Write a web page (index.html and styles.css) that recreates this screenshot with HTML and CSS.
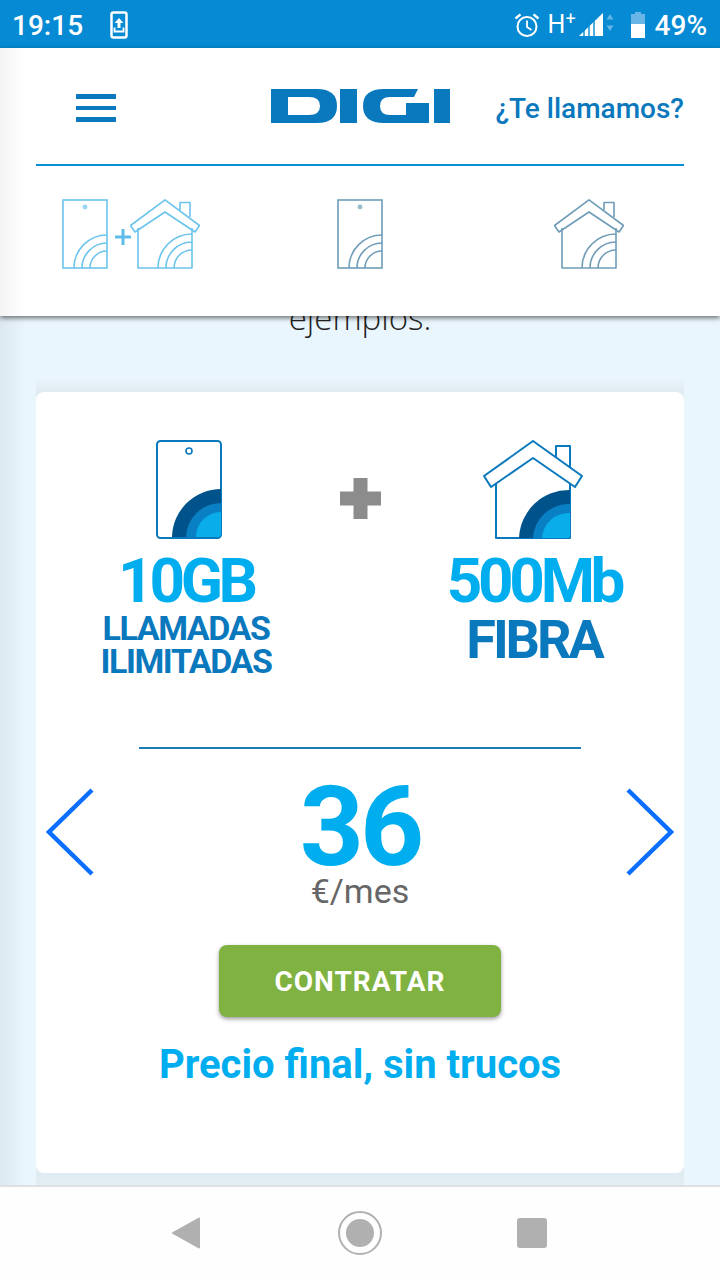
FILE: index.html
```html
<!DOCTYPE html>
<html lang="es">
<head>
  <meta charset="UTF-8" />
  <meta name="viewport" content="width=device-width, initial-scale=1.0" />
  <title>DIGI</title>
  <link rel="stylesheet" href="styles.css">
</head>
<body>
  <svg class="defs" aria-hidden="true">
    <symbol id="phone-line" viewBox="0 0 46 70">
      <rect x="1" y="1" width="44" height="68" fill="none" stroke="currentColor" stroke-width="1.6" />
      <circle cx="23" cy="8" r="2.4" fill="currentColor" opacity="0.7" />
      <g fill="none" stroke="currentColor" stroke-width="1.6">
        <path d="M12 69A33 33 0 0 1 45 36" />
        <path d="M20 69A25 25 0 0 1 45 44" />
        <path d="M28 69A17 17 0 0 1 45 52" />
      </g>
    </symbol>
    <symbol id="house-line" viewBox="0 0 70 70">
      <g fill="none" stroke="currentColor" stroke-width="1.6" stroke-linejoin="round">
        <path d="M50 11V3.500H60V18" />
        <path d="M35 .8L69.500 26.500L65 33L35 13L5 33L.5 26.500Z" />
        <path d="M8 29V69H62V29" />
        <path d="M28 69A34 34 0 0 1 62 35" />
        <path d="M36 69A26 26 0 0 1 62 43" />
        <path d="M44 69A18 18 0 0 1 62 51" />
      </g>
    </symbol>
  </svg>

  <div class="page">
    <div class="statusbar">
      <div class="status-left">
        <span class="status-text">19:15</span>
        <svg class="icon-upload" width="18" height="28" viewBox="0 0 18 28">
          <rect x="1.500" y="1.500" width="15" height="25" rx="2" fill="none" stroke="#fff" stroke-width="2.500" />
          <path d="M9 7L13.500 12H10.500V17H7.500V12H4.500Z" fill="#fff" />
          <path d="M4.500 16.500V20.500H13.500V16.500" fill="none" stroke="#fff" stroke-width="1.800" />
        </svg>
      </div>
      <div class="status-right">
        <svg class="icon-alarm" width="26" height="26" viewBox="0 0 26 26">
          <circle cx="13" cy="14.500" r="9.500" fill="none" stroke="#fff" stroke-width="2" />
          <path d="M13 8.500V15L17.500 18" fill="none" stroke="#fff" stroke-width="1.800" />
          <path d="M1.500 6.500L6.500 2.300M24.500 6.500L19.500 2.300" stroke="#fff" stroke-width="2.400" />
        </svg>
        <span class="status-net">H<sup>+</sup></span>
        <svg class="icon-signal" width="35" height="24" viewBox="0 0 35 24">
          <path d="M0 23L24 0V23Z" fill="#fff" />
          <path d="M5 14V24M10 9V24M15 5V24" stroke="#058ad3" stroke-width="1.400" />
          <path d="M31 1L34.500 6.500H27.500ZM31 18L27.500 12.500H34.500Z" fill="#64b5e6" />
        </svg>
        <svg class="icon-battery" width="14" height="26" viewBox="0 0 14 26">
          <path d="M4 0H10V2H14V26H0V2H4Z" fill="#67b6e6" />
          <rect y="12" width="14" height="14" fill="#fff" />
        </svg>
        <span class="status-text">49%</span>
      </div>
    </div>

    <header class="site-header">
      <div class="header-top">
        <div class="burger"><span></span><span></span><span></span></div>
        <svg class="logo" width="179" height="34" viewBox="0 0 179 34">
          <path fill-rule="evenodd" d="M0 0H46Q66 0 66 17Q66 34 46 34H0ZM17 8V26H38Q49 26 49 17Q49 8 38 8Z" />
          <rect x="69" width="17" height="34" />
          <path d="M147 0H113Q92 0 92 17Q92 34 113 34H158V14H135V26H119Q109 26 109 17Q109 8 119 8H143Z" />
          <rect x="163" width="16" height="34" />
        </svg>
        <a class="call-link">¿Te llamamos?</a>
      </div>
      <div class="tabs">
        <div class="tab tab-light">
          <svg class="tab-phone"><use href="#phone-line" /></svg>
          <svg class="tab-plus" width="16" height="16" viewBox="0 0 16 16"><path d="M8 0V16M0 8H16" stroke="currentColor" stroke-width="3" /></svg>
          <svg class="tab-house"><use href="#house-line" /></svg>
        </div>
        <div class="tab tab-dark">
          <svg class="tab-phone"><use href="#phone-line" /></svg>
        </div>
        <div class="tab tab-dark">
          <svg class="tab-house"><use href="#house-line" /></svg>
        </div>
      </div>
    </header>

    <main class="content">
      <p class="intro">ejemplos.</p>
      <div class="card-wrap">
        <section class="card">
          <div class="features">
            <div class="feature feature-mobile">
              <svg class="feature-icon" width="66" height="100" viewBox="0 0 66 100">
                <rect x="1" y="1" width="64" height="97" rx="3.500" fill="#fff" stroke="#0a78bd" stroke-width="2" />
                <circle cx="33" cy="11" r="3" fill="none" stroke="#0a78bd" stroke-width="1.600" />
                <path d="M16 97A49 49 0 0 1 65 49V94Q65 97 62 97Z" fill="#00528a" />
                <path d="M30 97A35 35 0 0 1 65 63V94Q65 97 62 97Z" fill="#0a80c4" />
                <path d="M40 97A25 25 0 0 1 65 72V94Q65 97 62 97Z" fill="#09ade9" />
              </svg>
              <div class="big-num">10GB</div>
              <div class="sub-small">LLAMADAS<br>ILIMITADAS</div>
            </div>
            <svg class="big-plus" width="41" height="41" viewBox="0 0 41 41"><path d="M20.500 0V41M0 20.500H41" stroke="#8c8c8c" stroke-width="14" /></svg>
            <div class="feature feature-home">
              <svg class="feature-icon" width="100" height="100" viewBox="0 0 100 100">
                <g fill="#fff" stroke="#0a78bd" stroke-width="2" stroke-linejoin="round">
                  <path d="M73 18V6H87V28Z" />
                  <path d="M13 36V98H87V36L50 17Z" />
                </g>
                <path d="M36 98A50 50 0 0 1 87 50V96Q87 98 85 98Z" fill="#00528a" />
                <path d="M50 98A36 36 0 0 1 87 64V96Q87 98 85 98Z" fill="#0a80c4" />
                <path d="M59 98A27 27 0 0 1 87 73V96Q87 98 85 98Z" fill="#09ade9" />
                <path d="M50 1L99 36L92 47L50 18L8 47L1 36Z" fill="#fff" stroke="#0a78bd" stroke-width="2" stroke-linejoin="round" />
              </svg>
              <div class="big-num">500Mb</div>
              <div class="sub-big">FIBRA</div>
            </div>
          </div>

          <div class="divider"></div>

          <div class="price-row">
            <svg class="chevron" width="48" height="88" viewBox="0 0 48 88"><path d="M46 2L3 44L46 86" /></svg>
            <div class="price">
              <div class="price-num">36</div>
              <div class="price-unit">€/mes</div>
            </div>
            <svg class="chevron" width="48" height="88" viewBox="0 0 48 88"><path d="M2 2L45 44L2 86" /></svg>
          </div>

          <button class="buy-btn">CONTRATAR</button>
          <p class="tagline">Precio final, sin trucos</p>
        </section>
      </div>
    </main>

    <nav class="navbar">
      <svg width="28" height="32" viewBox="0 0 28 32"><path d="M27 1.500V30.500L1 16Z" fill="#b0b0b0" stroke="#b0b0b0" stroke-width="2" stroke-linejoin="round" /></svg>
      <svg width="44" height="44" viewBox="0 0 44 44">
        <circle cx="22" cy="22" r="21" fill="none" stroke="#b0b0b0" stroke-width="2" />
        <circle cx="22" cy="22" r="14" fill="#b0b0b0" />
      </svg>
      <div class="nav-square"></div>
    </nav>
  </div>
</body>
</html>
```

FILE: styles.css
```css
* {
  box-sizing: border-box;
}

body {
  margin: 0;
  font-family: Roboto, "Liberation Sans", sans-serif;
  background: #fff;
}

.defs {
  display: none;
}

.page {
  width: 720px;
  height: 1280px;
  display: flex;
  flex-direction: column;
  overflow: hidden;
}

/* status bar */
.statusbar {
  height: 48px;
  flex: none;
  background: #058ad3;
  color: #fff;
  display: flex;
  justify-content: space-between;
  align-items: center;
  padding: 2px 13px 0 12px;
}

.status-left,
.status-right {
  display: flex;
  align-items: center;
}

.status-text {
  font-size: 28px;
  font-weight: 500;
}

.icon-upload {
  margin-left: 27px;
}

.icon-alarm {
  margin-right: 8px;
}

.status-net {
  font-size: 25px;
  margin-right: 5px;
  width: 26px;
  line-height: 30px;
}

.status-net sup {
  font-size: 18px;
  line-height: 0;
  vertical-align: 8px;
}

.icon-signal {
  margin-right: 17px;
}

.icon-battery {
  margin-right: 10px;
}

/* header */
.site-header {
  height: 268px;
  flex: none;
  background: linear-gradient(to right, #f4f4f4, #fff 26px);
  box-shadow: 0 2px 5px rgba(0, 0, 0, 0.55);
  position: relative;
  z-index: 2;
}

.header-top {
  height: 118px;
  margin: 0 36px;
  border-bottom: 2px solid #0a8fd4;
  display: grid;
  grid-template-columns: 1fr auto 1fr;
  align-items: center;
}

.burger {
  width: 40px;
  margin: 4px 0 0 40px;
  display: flex;
  flex-direction: column;
  gap: 7px;
}

.burger span {
  height: 4.500px;
  background: #0a78bd;
}

.logo {
  fill: #0a78bd;
}

.call-link {
  margin-top: 4px;
  font-size: 28px;
  font-weight: 500;
  color: #0a78bd;
  text-align: right;
  white-space: nowrap;
}

.tabs {
  display: grid;
  grid-template-columns: repeat(3, 229px);
  justify-content: center;
  padding-top: 33px;
}

.tab {
  display: flex;
  justify-content: center;
  align-items: center;
  height: 70px;
}

.tab-light {
  color: #6cc4ec;
}

.tab-dark {
  color: #6f9db8;
}

.tab-phone {
  width: 46px;
  height: 70px;
}

.tab-house {
  width: 70px;
  height: 70px;
}

.tab-plus {
  margin: 6px -1px 0 7px;
  color: #5cbdea;
}

/* content */
.content {
  flex: 1;
  min-height: 0;
  background: linear-gradient(to right, #dce8ef, #eaf6fd 26px);
  overflow: hidden;
}

.intro {
  height: 62px;
  margin: 0;
  font-family: "Open Sans", sans-serif;
  font-size: 33px;
  font-weight: 300;
  line-height: 30px;
  color: #222;
  text-align: center;
  transform: translateY(-13px);
}

.card-wrap {
  margin: 0 36px;
  padding: 14px 0 12px;
  background: linear-gradient(to bottom, #eaf6fd, #dfebf1 14px, #dfebf1 calc(100% - 12px), #e2eef4);
}

.card {
  height: 781px;
  background: #fff;
  border-radius: 8px;
  display: flex;
  flex-direction: column;
  align-items: center;
}

.features {
  align-self: stretch;
  height: 355px;
  padding-top: 48px;
  display: flex;
  align-items: flex-start;
}

.feature {
  display: flex;
  flex-direction: column;
  align-items: center;
}

.feature-mobile {
  width: 264px;
  margin-left: 18px;
}

.feature-mobile .feature-icon {
  margin-left: 6px;
}

.feature-home {
  width: 270px;
}

.feature-home .feature-icon {
  margin-right: 2px;
}

.big-plus {
  margin: 38px 18px 0 22px;
}

.big-num {
  font-size: 62px;
  font-weight: 700;
  line-height: 62px;
  letter-spacing: -4.300px;
  color: #00aeef;
  margin-top: 10px;
}

.sub-small {
  font-size: 34px;
  font-weight: 700;
  line-height: 33px;
  letter-spacing: -1.400px;
  color: #0a78bd;
  text-align: center;
}

.sub-big {
  font-size: 54px;
  font-weight: 700;
  line-height: 56px;
  letter-spacing: -3.100px;
  color: #0a78bd;
}

.divider {
  width: 442px;
  height: 2px;
  background: #1a7fb5;
}

.price-row {
  align-self: stretch;
  display: flex;
  justify-content: space-between;
  align-items: center;
  padding: 0 10px;
  margin-top: 29px;
}

.chevron {
  fill: none;
  stroke: #0a6eff;
  stroke-width: 4.500;
  margin-top: -24px;
}

.price {
  text-align: center;
}

.price-num {
  font-size: 112px;
  font-weight: 700;
  line-height: 90px;
  letter-spacing: -4px;
  color: #00aeef;
  margin-top: 4px;
}

.price-unit {
  font-size: 34px;
  line-height: 38px;
  color: #666;
}

.buy-btn {
  width: 282px;
  height: 72px;
  margin-top: 35px;
  border: none;
  border-radius: 8px;
  background: #7fb241;
  box-shadow: 0 2px 4px rgba(0, 0, 0, 0.4);
  color: #fff;
  font-family: inherit;
  font-size: 28px;
  font-weight: 700;
  letter-spacing: 1px;
}

.tagline {
  margin: 23px 0 0;
  font-size: 40px;
  font-weight: 700;
  line-height: 50px;
  color: #00aeef;
}

/* android nav */
.navbar {
  height: 95px;
  flex: none;
  background: #fefefe;
  border-top: 2px solid #e0e0e0;
  display: flex;
  justify-content: center;
  align-items: center;
  gap: 138px;
  padding: 0 2px 2px 0;
}

.nav-square {
  width: 30px;
  height: 30px;
  margin-left: -3px;
  border-radius: 3px;
  background: #b0b0b0;
}
```
